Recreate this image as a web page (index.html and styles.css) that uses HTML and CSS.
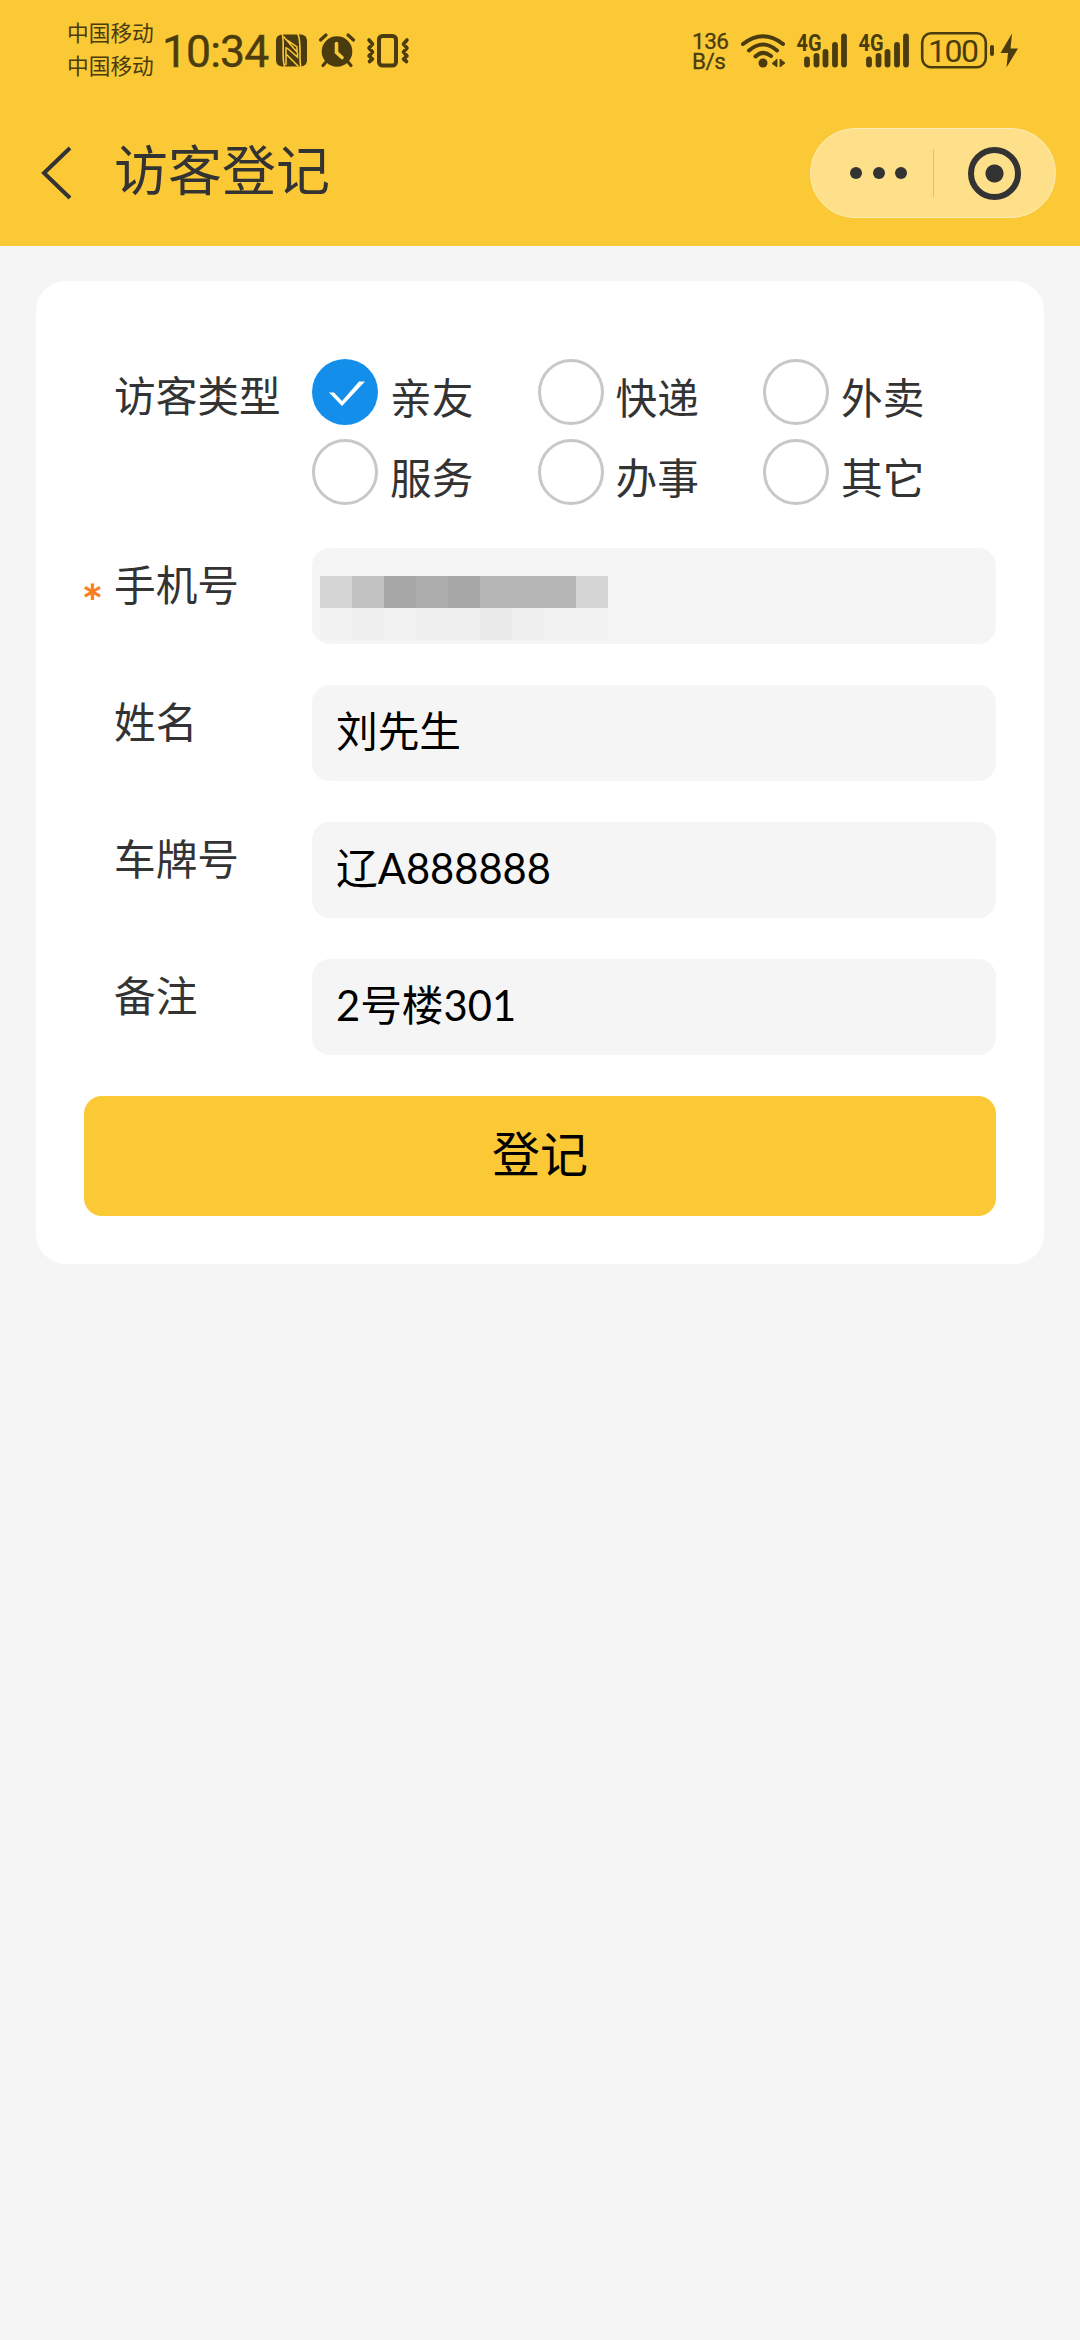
FILE: index.html
```
<!DOCTYPE html>
<html lang="zh-CN">
<head>
  <meta charset="UTF-8">
  <meta name="viewport" content="width=device-width, initial-scale=1.0">
  <title>访客登记</title>
  <link rel="stylesheet" href="styles.css">
</head>
<body>
  <header>
    <div class="status-bar">
      <div class="carriers">
        <div>中国移动</div>
        <div>中国移动</div>
      </div>
      <div class="time">10:34</div>
      <!-- nfc, alarm, vibrate -->
      <svg class="status-left" width="134" height="40" viewBox="276 30 134 40">
        <rect x="276" y="34.500" width="31" height="32" rx="6" fill="#4a3c0f"/>
        <path d="M282 34C285 38 281 62 285 67M297.500 34C302 38 298.500 62 301 67" fill="none" stroke="#fbc935" stroke-width="1.600"/>
        <path d="M283.500 36.500L297 52V47L287 40M286 47v18M287 48L297.500 57V53M286 54L298.500 66.500" fill="none" stroke="#fbc935" stroke-width="1.500"/>
        <circle cx="337" cy="51.500" r="15.300" fill="#4a3c0f"/>
        <path d="M320.500 40l5.500-5M353.500 40l-5.500-5M326 62l-3 3.500M348 62l3 3.500" stroke="#4a3c0f" stroke-width="3.200" stroke-linecap="round"/>
        <path d="M336.500 43.500v9l5.500 5" fill="none" stroke="#fbc935" stroke-width="3.600" stroke-linecap="round"/>
        <rect x="379" y="36" width="17" height="29.500" rx="3.500" fill="none" stroke="#4a3c0f" stroke-width="4"/>
        <path d="M369 40l3.500 4-3.500 4 3.500 4-3.500 4 3.500 3-3 2.500M407 40l-3.500 4 3.500 4-3.500 4 3.500 4-3.500 3 3 2.500" fill="none" stroke="#4a3c0f" stroke-width="3.600" stroke-linecap="round" stroke-linejoin="round"/>
      </svg>
      <div class="speed">
        <div>136</div>
        <div>B/s</div>
      </div>
      <!-- wifi, signal x2, battery, charging -->
      <svg class="status-right" width="280" height="40" viewBox="740 30 280 40">
        <g fill="none" stroke="#4a3c0f" stroke-width="4" stroke-linecap="round">
          <path d="M743 44Q763 28.500 783 44"/>
          <path d="M749 50.500Q763 38.500 777 50.500"/>
          <path d="M755.500 56.500Q763 49.500 771 56"/>
        </g>
        <circle cx="763" cy="63" r="4.500" fill="#4a3c0f"/>
        <path d="M777 59v8l-5-3.500zM780 59l5 4-5 4z" fill="#4a3c0f" stroke="#4a3c0f" stroke-width=".8"/>
        <text class="net" x="796.500" y="50.500" textLength="25" lengthAdjust="spacingAndGlyphs">4G</text>
        <text class="net" x="858.500" y="50.500" textLength="25" lengthAdjust="spacingAndGlyphs">4G</text>
        <g id="signal">
          <path d="M807 59.500v5M816.500 56v8.500M825.500 52v12.500M835 45v19.500M844 36.500v28" stroke="#4a3c0f" stroke-width="5.800" stroke-linecap="round"/>
        </g>
        <use href="#signal" x="62"/>
        <rect x="922.200" y="33.200" width="63.600" height="34" rx="9" fill="none" stroke="#4a3c0f" stroke-width="2.600"/>
        <text class="battery" x="928" y="61.500" textLength="51">100</text>
        <rect x="990" y="45" width="4" height="11" rx="2" fill="#4a3c0f"/>
        <path d="M1012 33.500L1000.500 53h7.500l-1.500 14.500L1018 48.500h-7.500z" fill="#4a3c0f"/>
      </svg>
    </div>
    <div class="nav-bar">
      <svg class="back" width="34" height="54" viewBox="0 0 34 54">
        <path d="M31 2L5 27l26 25" fill="none" stroke="#333" stroke-width="4"/>
      </svg>
      <h1>访客登记</h1>
      <div class="capsule">
        <div class="dots"><i></i><i></i><i></i></div>
        <div class="close"></div>
      </div>
    </div>
  </header>

  <form class="card">
    <div class="row type-row">
      <div class="label">访客类型</div>
      <div class="types">
        <div class="type"><span class="radio checked">
          <svg width="36" height="26" viewBox="0 0 36 26"><path d="M0 11.500h5l8 8.500L30 .5h6L13 25z" fill="#fff"/></svg>
        </span>亲友</div>
        <div class="type"><span class="radio"></span>快递</div>
        <div class="type"><span class="radio"></span>外卖</div>
        <div class="type"><span class="radio"></span>服务</div>
        <div class="type"><span class="radio"></span>办事</div>
        <div class="type"><span class="radio"></span>其它</div>
      </div>
    </div>
    <div class="row">
      <div class="label required">手机号</div>
      <div class="field phone">
        <div class="mosaic">
          <i class="m1"></i><i class="m2"></i><i class="m3"></i><i class="m4"></i><i class="m3"></i><i class="m5"></i><i class="m5"></i><i class="m5"></i><i class="m1"></i>
          <i class="m6"></i><i class="m7"></i><i class="m6"></i><i class="m7"></i><i class="m7"></i><i class="m8"></i><i class="m7"></i><i class="m6"></i><i class="m6"></i>
        </div>
      </div>
    </div>
    <div class="row">
      <div class="label">姓名</div>
      <div class="field">刘先生</div>
    </div>
    <div class="row">
      <div class="label">车牌号</div>
      <div class="field">辽A888888</div>
    </div>
    <div class="row">
      <div class="label">备注</div>
      <div class="field">2号楼301</div>
    </div>
    <button type="button">登记</button>
  </form>
</body>
</html>
```
FILE: styles.css
```
* {
  box-sizing: border-box;
}

body {
  margin: 0;
  min-height: 2340px;
  background: #f5f5f5;
  color: #333;
  font-family: Lato, "Noto Sans CJK SC", sans-serif;
}

header {
  height: 246px;
  background: #fbc935;
}

.status-bar {
  display: flex;
  height: 100px;
  padding: 15px 60px 0 67px;
  color: #4a3c0f;
}

.carriers {
  width: 95px;
  font-family: "Noto Sans CJK SC", sans-serif;
  font-size: 21.7px;
  line-height: 33px;
}

.time {
  width: 114px;
  padding-top: 4px;
  font-family: Roboto, sans-serif;
  font-size: 44.5px;
  letter-spacing: -0.9px;
  line-height: 66px;
  -webkit-text-stroke: 0.4px #4a3c0f;
}

.status-left,
.status-right {
  margin-top: 15px;
}

.speed {
  width: 48px;
  margin: 16px 0 0 auto;
  font-family: Roboto, sans-serif;
  font-size: 22.5px;
  letter-spacing: -0.5px;
  line-height: 20px;
  -webkit-text-stroke: 0.3px #4a3c0f;
}

.net {
  font: bold 23px Roboto, sans-serif;
  fill: #4a3c0f;
}

.battery {
  font: 32px Roboto, sans-serif;
  fill: #4a3c0f;
}

.nav-bar {
  display: flex;
  align-items: center;
  height: 146px;
  padding: 0 24px 0 39px;
}

h1 {
  margin: -11px auto 0 41px;
  font-family: "Noto Sans CJK SC", sans-serif;
  font-size: 54px;
  font-weight: 400;
  line-height: 80px;
}

.capsule {
  display: flex;
  align-items: center;
  width: 246px;
  height: 90px;
  border: 1px solid #fdecb8;
  border-radius: 45px;
  background: #fee08b;
}

.dots {
  display: flex;
  align-items: center;
  gap: 10.5px;
  width: 123px;
  height: 48px;
  padding-left: 39px;
  border-right: 1px solid #d0c193;
}

.dots i {
  width: 12px;
  height: 12px;
  border-radius: 50%;
  background: #333;
}

.close {
  width: 53px;
  height: 53px;
  margin-left: 34px;
  border: 6px solid #333;
  border-radius: 50%;
  background: radial-gradient(circle, #333 8.5px, transparent 9.5px);
}

.card {
  display: flex;
  flex-direction: column;
  gap: 41px;
  margin: 35px 36px 0;
  padding: 78px 48px 48px;
  border-radius: 30px;
  background: #fff;
}

.row {
  display: flex;
}

.label {
  position: relative;
  width: 228px;
  padding-left: 30px;
  font-size: 41.7px;
  line-height: 74px;
}

.type-row {
  height: 148px;
}

.type-row .label {
  white-space: nowrap;
}

.required::before {
  content: "*";
  position: absolute;
  left: 0;
  top: 12px;
  font-family: "DejaVu Sans", sans-serif;
  font-size: 34px;
  color: #fa7d22;
  -webkit-text-stroke: 1.2px #fa7d22;
}

.types {
  display: grid;
  grid-template-columns: repeat(3, 225.5px);
  grid-auto-rows: 66px;
  row-gap: 14px;
}

.type {
  display: flex;
  font-size: 41.7px;
  line-height: 78px;
}

.radio {
  display: flex;
  align-items: center;
  justify-content: center;
  width: 66px;
  height: 66px;
  margin-right: 12px;
  border: 3px solid #c8c8c8;
  border-radius: 50%;
}

.radio.checked {
  padding: 4px 0 0 3px;
  border: 0;
  background: #148eeb;
}

.field {
  flex: 1;
  height: 96px;
  padding-left: 24px;
  border-radius: 18px;
  background: #f5f5f5;
  color: #000;
  font-size: 41.7px;
  line-height: 93px;
}

.phone {
  padding: 28px 0 0 8px;
}

.mosaic {
  display: grid;
  grid-template-columns: repeat(9, 32px);
  grid-auto-rows: 32px;
}

.m1 { background: #d5d5d5; }
.m2 { background: #c2c2c2; }
.m3 { background: #a6a6a6; }
.m4 { background: #adadad; }
.m5 { background: #b6b6b6; }
.m6 { background: #f2f2f2; }
.m7 { background: #efefef; }
.m8 { background: #eaeaea; }

button {
  height: 120px;
  padding: 0 0 11px;
  border: 0;
  border-radius: 18px;
  background: #fbc935;
  color: #000;
  font-family: "Noto Sans CJK SC", sans-serif;
  font-size: 48px;
}
```
